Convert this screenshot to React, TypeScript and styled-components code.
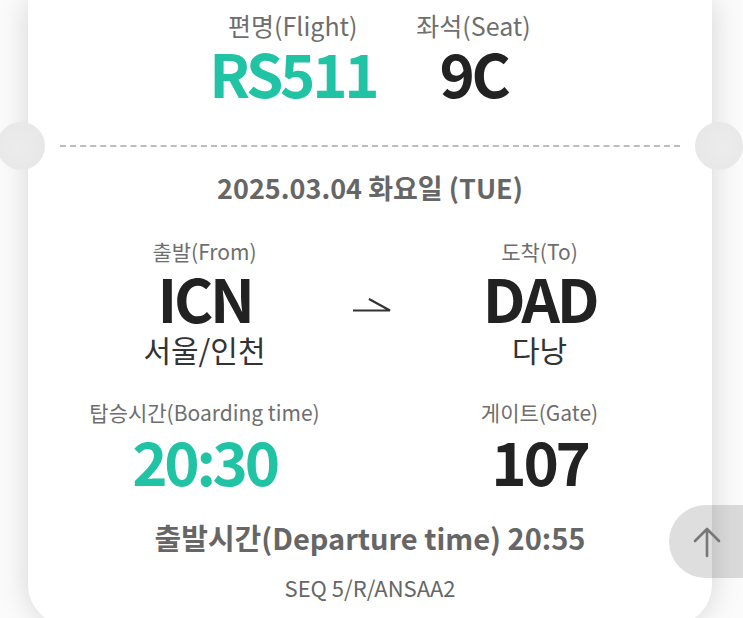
import React from "react";
import styled, { createGlobalStyle } from "styled-components";

const Global = createGlobalStyle`
  html, body { margin: 0; padding: 0; background: #ffffff; }
  body { font-family: "Noto Sans CJK KR", "Noto Sans", sans-serif; overflow: hidden; }
`;

const TEAL = "#20c3a3";

const Page = styled.div`
  width: 743px;
  height: 618px;
  overflow: hidden;
  position: relative;
  background: #fbfbfb;
`;

const Card = styled.div`
  position: relative;
  margin: 0 31px 0 28px;
  height: 625px;
  box-sizing: border-box;
  padding-top: 10px;
  background: #ffffff;
  border-radius: 0 0 40px 40px;
  box-shadow: 0 0 30px rgba(0, 0, 0, 0.16);
  display: flex;
  flex-direction: column;
  align-items: center;
`;

const Notch = styled.div<{ side: "left" | "right" }>`
  position: absolute;
  top: 122px;
  ${(p) => (p.side === "left" ? "left: -31px;" : "right: -31px;")}
  width: 48px;
  height: 48px;
  border-radius: 50%;
  background: radial-gradient(circle at ${(p) => (p.side === "left" ? "40%" : "60%")} 50%, #ececec 0%, #e6e6e6 100%);
`;

const TopRow = styled.div`
  display: flex;
  gap: 40px;
  justify-content: center;
`;

const Item = styled.div`
  display: flex;
  flex-direction: column;
  align-items: center;
`;

const Label = styled.div`
  font-size: 25px;
  line-height: 30px;
  color: #6e6e6e;
  white-space: nowrap;
`;

const BigValue = styled.div<{ teal?: boolean; h: number }>`
  font-size: 60px;
  font-weight: 700;
  line-height: ${(p) => p.h}px;
  color: ${(p) => (p.teal ? TEAL : "#222222")};
  letter-spacing: -3.3px;
  white-space: nowrap;
`;

const Divider = styled.div`
  align-self: stretch;
  margin: 41px 32px 0 32px;
  height: 0;
  border-top: 2px dashed #bdbdbd;
`;

const DateText = styled.div`
  margin-top: 23px;
  font-size: 27px;
  line-height: 36px;
  font-weight: 700;
  color: #666666;
`;

const Grid = styled.div<{ mt: number }>`
  margin-top: ${(p) => p.mt}px;
  margin-left: 4px;
  display: grid;
  grid-template-columns: 215px 120px 215px;
  justify-content: center;
`;

const Col = styled.div`
  display: flex;
  flex-direction: column;
  align-items: center;
`;

const Mid = styled.div`
  display: flex;
  align-items: flex-start;
  justify-content: center;
  padding-top: 59px;
  margin-left: -1px;
`;

const RouteLabel = styled.div`
  font-size: 21px;
  line-height: 28px;
  color: #6e6e6e;
  white-space: nowrap;
`;

const City = styled.div`
  font-size: 30px;
  line-height: 40px;
  color: #333333;
`;

const Departure = styled.div`
  margin-top: 25px;
  font-size: 29px;
  line-height: 36px;
  font-weight: 700;
  color: #666666;
  white-space: nowrap;
`;

const Seq = styled.div`
  margin-top: 19px;
  font-size: 22px;
  line-height: 26px;
  color: #666666;
`;

const TopButton = styled.button`
  position: absolute;
  left: 669px;
  top: 505px;
  width: 110px;
  height: 73px;
  border: none;
  padding: 0 0 0 21px;
  border-radius: 37px;
  background: rgba(0, 0, 0, 0.13);
  display: flex;
  align-items: center;
  cursor: pointer;
`;

const Harpoon = () => (
  <svg width="40" height="16" viewBox="0 0 40 16" fill="none">
    <path d="M1 14.5 H38 L17 3" stroke="#333" strokeWidth="2.2" strokeLinejoin="miter" />
  </svg>
);

const UpArrow = () => (
  <svg width="34" height="34" viewBox="0 0 34 34" fill="none">
    <path d="M17 31 V4 M5 16 L17 4 L29 16" stroke="#777" strokeWidth="2.6" strokeLinecap="round" strokeLinejoin="round" />
  </svg>
);

export default function App() {
  return (
    <Page>
      <Global />
      <Card>
        <Notch side="left" />
        <Notch side="right" />
        <TopRow>
          <Item>
            <Label>편명(Flight)</Label>
            <BigValue teal h={64}>RS511</BigValue>
          </Item>
          <Item>
            <Label>좌석(Seat)</Label>
            <BigValue h={64}>9C</BigValue>
          </Item>
        </TopRow>
        <Divider />
        <DateText>2025.03.04 화요일 (TUE)</DateText>
        <Grid mt={31}>
          <Col>
            <RouteLabel>출발(From)</RouteLabel>
            <BigValue h={64}>ICN</BigValue>
            <City>서울/인천</City>
          </Col>
          <Mid>
            <Harpoon />
          </Mid>
          <Col>
            <RouteLabel>도착(To)</RouteLabel>
            <BigValue h={64}>DAD</BigValue>
            <City>다낭</City>
          </Col>
        </Grid>
        <Grid mt={29}>
          <Col>
            <RouteLabel>탑승시간(Boarding time)</RouteLabel>
            <BigValue teal h={68}>20:30</BigValue>
          </Col>
          <Mid />
          <Col>
            <RouteLabel>게이트(Gate)</RouteLabel>
            <BigValue h={68}>107</BigValue>
          </Col>
        </Grid>
        <Departure>출발시간(Departure time) 20:55</Departure>
        <Seq>SEQ 5/R/ANSAA2</Seq>
      </Card>
      <TopButton aria-label="맨 위로">
        <UpArrow />
      </TopButton>
    </Page>
  );
}
